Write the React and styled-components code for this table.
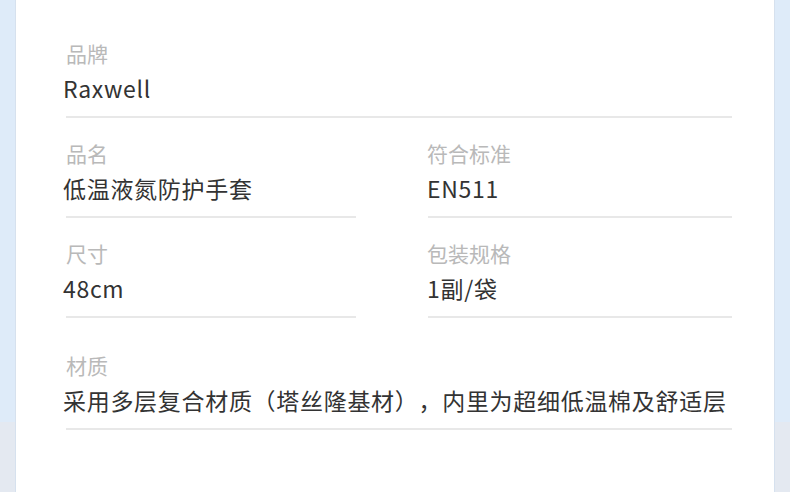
import styled, { createGlobalStyle } from "styled-components";

const GlobalStyle = createGlobalStyle`
  html, body {
    margin: 0;
    padding: 0;
    height: 100%;
  }
  body {
    background: linear-gradient(to bottom, #deebf9 0, #deebf9 422px, #e4e9f1 422px);
    font-family: "Noto Sans CJK SC", "Noto Sans", sans-serif;
  }
`;

const Page = styled.div`
  height: 492px;
  padding: 0 15px;
  box-sizing: border-box;
`;

const Card = styled.div`
  height: 100%;
  background: #fff;
  border-left: 1px solid #d6e1ee;
  border-right: 1px solid #d6e1ee;
  box-sizing: border-box;
  padding: 39px 0 0 47px;
`;

const Grid = styled.div`
  display: grid;
  grid-template-columns: 293px 305px;
  column-gap: 71px;
`;

const Field = styled.div`
  grid-column: ${(p) => (p.$full ? "1 / -1" : "auto")};
  padding-top: ${(p) => (p.$first ? "0" : p.$extra ? "33px" : "21px")};
`;

const Label = styled.div`
  font-size: 21px;
  line-height: 28px;
  color: #b9b9b9;
  padding-left: ${(p) => (p.$right ? "0" : "3px")};
`;

const Value = styled.div`
  margin-top: 5px;
  font-size: 23px;
  line-height: 32px;
  color: #333;
  letter-spacing: 0.7px;
  white-space: nowrap;
  text-spacing-trim: space-all;
`;

const Divider = styled.div`
  margin: 12px 0 0 ${(p) => (p.$right ? "1px" : "3px")};
  height: 2px;
  background: #e8e8e8;
`;

const fields = [
  { label: "品牌", value: "Raxwell", full: true, first: true },
  { label: "品名", value: "低温液氮防护手套" },
  { label: "符合标准", value: "EN511", right: true },
  { label: "尺寸", value: "48cm" },
  { label: "包装规格", value: "1副/袋", right: true },
  {
    label: "材质",
    value: "采用多层复合材质（塔丝隆基材），内里为超细低温棉及舒适层",
    full: true,
    extra: true,
  },
];

export default function App() {
  return (
    <>
      <GlobalStyle />
      <Page>
        <Card>
          <Grid>
            {fields.map((f) => (
              <Field key={f.label} $full={f.full} $first={f.first} $extra={f.extra}>
                <Label $right={f.right}>{f.label}</Label>
                <Value>{f.value}</Value>
                <Divider $right={f.right} />
              </Field>
            ))}
          </Grid>
        </Card>
      </Page>
    </>
  );
}
